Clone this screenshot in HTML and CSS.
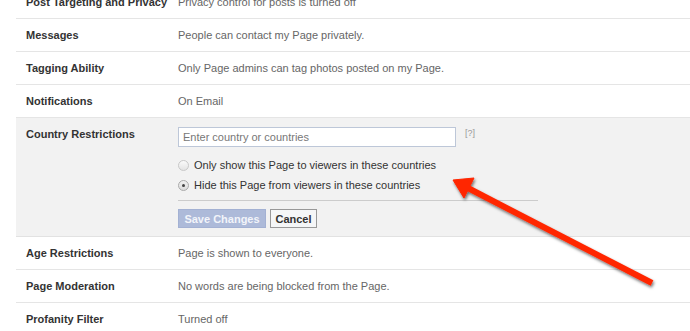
FILE: index.html
```html
<!DOCTYPE html>
<html lang="en">
<head>
    <meta charset="UTF-8">
    <meta name="viewport" content="width=device-width, initial-scale=1.0">
    <title>Page Settings</title>

    <link rel="stylesheet" href="styles.css">
</head>
<body>

    <div class="settings">
        <div class="row">
            <div class="label">Post Targeting and Privacy</div>
            <div class="value">Privacy control for posts is turned off</div>
        </div>
        <div class="row">
            <div class="label">Messages</div>
            <div class="value">People can contact my Page privately.</div>
        </div>
        <div class="row">
            <div class="label">Tagging Ability</div>
            <div class="value">Only Page admins can tag photos posted on my Page.</div>
        </div>
        <div class="row">
            <div class="label">Notifications</div>
            <div class="value">On Email</div>
        </div>

        <!-- Edit form that is open -->
        <div class="row editing">
            <div class="label">Country Restrictions</div>
            <div class="editor">
                <div class="input-line">
                    <div class="text-input">Enter country or countries</div>
                    <span class="help">[?]</span>
                </div>
                <div class="choice"><span class="radio"></span>Only show this Page to viewers in these countries</div>
                <div class="choice"><span class="radio checked"></span>Hide this Page from viewers in these countries</div>
                <div class="actions">
                    <button class="btn-save">Save Changes</button>
                    <button class="btn-cancel">Cancel</button>
                </div>
            </div>
        </div>

        <div class="row">
            <div class="label">Age Restrictions</div>
            <div class="value">Page is shown to everyone.</div>
        </div>
        <div class="row">
            <div class="label">Page Moderation</div>
            <div class="value">No words are being blocked from the Page.</div>
        </div>
        <div class="row">
            <div class="label">Profanity Filter</div>
            <div class="value">Turned off</div>
        </div>
    </div>

    <!-- red arrow drawn over the screenshot -->
    <svg class="arrow" width="690" height="331" viewBox="0 0 690 331">
        <defs>
            <filter id="shadow" x="-20%" y="-20%" width="140%" height="140%">
                <feDropShadow dx="1" dy="2" stdDeviation="1.6" flood-color="#000" flood-opacity="0.55"/>
            </filter>
        </defs>
        <g filter="url(#shadow)" fill="#ff2600" stroke="#ff2600">
            <line x1="466" y1="187" x2="652" y2="283" stroke-width="6"/>
            <polygon points="453,180 474,178 464,198" stroke-width="1" stroke-linejoin="round"/>
        </g>
    </svg>

</body>
</html>
```

FILE: styles.css
```css
* {
    margin: 0;
    padding: 0;
    box-sizing: border-box;
}

body {
    font-family: 'Liberation Sans', Arial, sans-serif;
    font-size: 11px;
    background-color: #ffffff;
    color: #333;
    width: 690px;
    height: 331px;
    overflow: hidden;
    position: relative;
}

/* Settings list */
.settings {
    margin-top: -14px;
    margin-left: 16px;
}

.row {
    display: grid;
    grid-template-columns: 162px 1fr;
    height: 33px;
    align-items: center;
    border-bottom: 1px solid #e5e5e5;
}

.label {
    padding-left: 10px;
    font-weight: bold;
    color: #333;
}

.value {
    color: #666;
}

/* Open editor */
.row.editing {
    height: auto;
    align-items: start;
    background-color: #f2f2f2;
    padding: 9px 0 8px;
    border-bottom: 1px solid #e2e2e2;
}

.row.editing .label {
    padding-top: 1px;
}

.editor {
    width: 360px;
}

.input-line {
    display: flex;
    align-items: flex-start;
    gap: 9px;
    margin-bottom: 8px;
}

.text-input {
    width: 278px;
    height: 20px;
    border: 1px solid #bdc7d8;
    background-color: #fff;
    color: #777;
    padding: 3px 4px 0;
    font-size: 11px;
}

.help {
    font-size: 9px;
    color: #999;
    padding-top: 1px;
}

.choice {
    display: flex;
    align-items: center;
    height: 20px;
    color: #333;
}

.radio {
    width: 11px;
    height: 11px;
    border-radius: 50%;
    border: 1px solid #c8c8c8;
    background: linear-gradient(#fafafa, #e4e4e4);
    margin-right: 5px;
    position: relative;
}

.radio.checked {
    border-color: #aaa;
    background: linear-gradient(#f0f0f0, #dcdcdc);
}

.radio.checked::after {
    content: "";
    position: absolute;
    left: 3px;
    top: 3px;
    width: 3px;
    height: 3px;
    border-radius: 50%;
    background-color: #444;
}

.actions {
    display: flex;
    gap: 4px;
    margin-top: 5px;
    padding-top: 8px;
    border-top: 1px solid #cccccc;
}

button {
    font-family: 'Liberation Sans', Arial, sans-serif;
    font-size: 11px;
    font-weight: bold;
    height: 19px;
    padding: 0;
    white-space: nowrap;
    cursor: pointer;
}

.btn-save {
    width: 88px;
    background-color: #adbad9;
    border: 1px solid #a3b1d3;
    color: #f2f4fa;
}

.btn-cancel {
    width: 47px;
    background-color: #f5f6f7;
    border: 1px solid #999;
    color: #333;
}

/* Annotation arrow */
.arrow {
    position: absolute;
    left: 0;
    top: 0;
    pointer-events: none;
}
```
